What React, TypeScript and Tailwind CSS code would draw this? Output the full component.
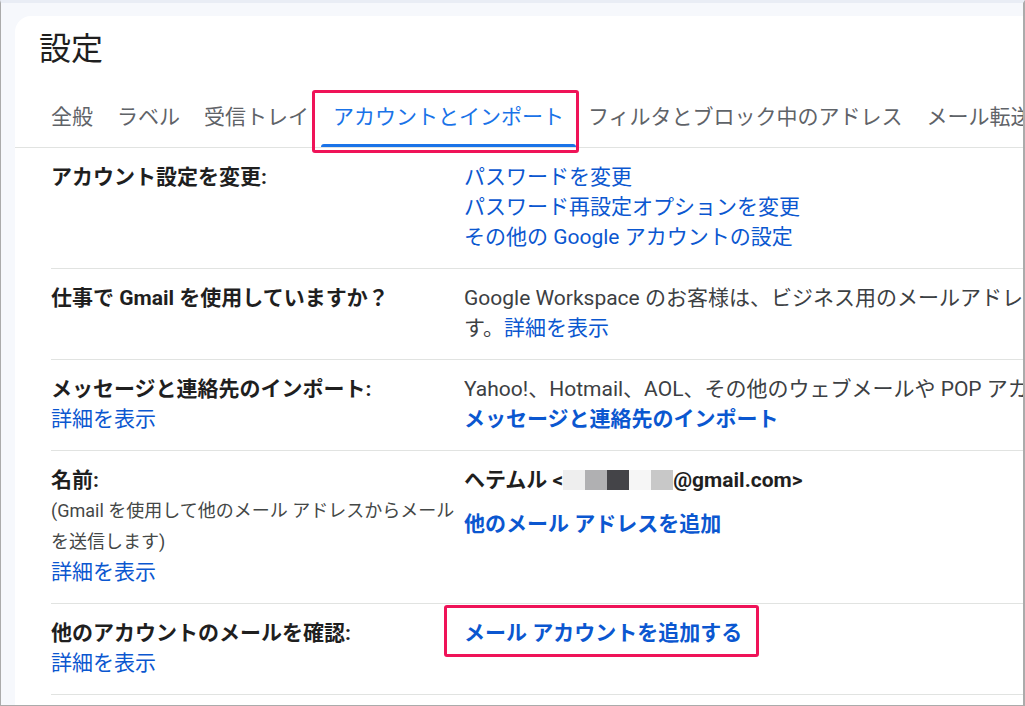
import React from 'react';

const FONT = "font-['Roboto','Noto_Sans_CJK_JP',sans-serif]";

const Highlight: React.FC<{ className: string }> = ({ className }) => (
  <span className={`pointer-events-none absolute rounded-[3px] border-[3px] border-[#ef1358] ${className}`} />
);

const tabs = ['全般', 'ラベル', '受信トレイ', 'アカウントとインポート', 'フィルタとブロック中のアドレス', 'メール転送と POP/IMAP', 'アドオン'];

const Row: React.FC<{ label: React.ReactNode; children: React.ReactNode; clip?: boolean }> = ({ label, children, clip = true }) => (
  <div className="flex border-b border-[#e1e3e1] pt-[14px] pb-[16px]">
    <div className="w-[413px] shrink-0">{label}</div>
    <div className={`min-w-0 flex-1 ${clip ? 'overflow-hidden' : ''}`}>{children}</div>
  </div>
);

const Label: React.FC<{ children: React.ReactNode }> = ({ children }) => (
  <div className="text-[21px] font-bold leading-[30px] text-[#1f1f1f]">{children}</div>
);

const Link: React.FC<{ children: React.ReactNode; bold?: boolean }> = ({ children, bold }) => (
  <div className={`whitespace-nowrap text-[21px] leading-[30px] text-[#0b57d0] ${bold ? 'font-bold' : ''}`}>{children}</div>
);

export default function App() {
  return (
    <div className={`h-[706px] w-[1025px] overflow-hidden border-t-[3px] border-r-2 border-b border-l border-[#ababab] border-t-[#e9edf5] bg-[#f6f8fc] ${FONT}`}>
      <div className="ml-[14px] mt-[13px] h-full overflow-hidden rounded-tl-[16px] bg-white pt-[13px]">
        <h1 className="pl-[24px] text-[32px] font-normal leading-[40px] text-[#1f1f1f]">設定</h1>

        <div className="mt-[22px] flex border-b border-[#e1e3e1] pl-[24px]">
          {tabs.map((t) => {
            const active = t === 'アカウントとインポート';
            return (
              <div
                key={t}
                className={`relative shrink-0 whitespace-nowrap px-[12px] pt-[14px] pb-[17px] text-[21px] leading-[25px] ${
                  active ? 'text-[#1a73e8]' : 'text-[#5f6368]'
                }`}
              >
                {t}
                {active && (
                  <>
                    <span className="absolute bottom-0 left-0 right-0 h-[3px] rounded-t-[3px] bg-[#1a73e8]" />
                    <Highlight className="-top-[1px] -left-[9px] -right-[3px] -bottom-[6px]" />
                  </>
                )}
              </div>
            );
          })}
        </div>

        <div className="pl-[36px]">
          <Row label={<Label>アカウント設定を変更:</Label>}>
            <Link>パスワードを変更</Link>
            <Link>パスワード再設定オプションを変更</Link>
            <Link>その他の Google アカウントの設定</Link>
          </Row>

          <Row label={<Label>仕事で Gmail を使用していますか？</Label>}>
            <div className="whitespace-nowrap text-[21px] leading-[30px] text-[#3c4043]">
              Google Workspace のお客様は、ビジネス用のメールアドレスで Gmail を使用できま
            </div>
            <div className="whitespace-nowrap text-[21px] leading-[30px] text-[#3c4043]">
              す。<span className="text-[#0b57d0]">詳細を表示</span>
            </div>
          </Row>

          <Row
            label={
              <>
                <Label>メッセージと連絡先のインポート:</Label>
                <Link>詳細を表示</Link>
              </>
            }
          >
            <div className="whitespace-nowrap text-[21px] leading-[30px] text-[#3c4043]">
              Yahoo!、Hotmail、AOL、その他のウェブメールや POP アカウントからインポートします。
            </div>
            <Link bold>メッセージと連絡先のインポート</Link>
          </Row>

          <Row
            label={
              <>
                <Label>名前:</Label>
                <div className="text-[18px] leading-[31px] text-[#444746]">
                  (Gmail を使用して他のメール アドレスからメール
                  <br />
                  を送信します)
                </div>
                <Link>詳細を表示</Link>
              </>
            }
          >
            <div className="flex items-center whitespace-nowrap text-[21px] font-bold leading-[30px] text-[#1f1f1f]">
              <span>ヘテムル &lt;</span>
              <span className="inline-block h-[20px] w-[22px] bg-[#eeeeee]" />
              <span className="inline-block h-[20px] w-[22px] bg-[#b0b0b2]" />
              <span className="inline-block h-[20px] w-[22px] bg-[#444448]" />
              <span className="inline-block h-[20px] w-[22px] bg-[#f6f6f6]" />
              <span className="inline-block h-[20px] w-[22px] bg-[#c8c8c8]" />
              <span>@gmail.com&gt;</span>
            </div>
            <div className="mt-[14px]">
              <Link bold>他のメール アドレスを追加</Link>
            </div>
          </Row>

          <Row
            clip={false}
            label={
              <>
                <Label>他のアカウントのメールを確認:</Label>
                <Link>詳細を表示</Link>
              </>
            }
          >
            <span className="relative inline-block whitespace-nowrap text-[21px] font-bold leading-[30px] text-[#0b57d0]">
              メール アカウントを追加する
              <Highlight className="-top-[13px] -left-[20px] -right-[17px] -bottom-[9px]" />
            </span>
          </Row>
        </div>
      </div>
    </div>
  );
}
